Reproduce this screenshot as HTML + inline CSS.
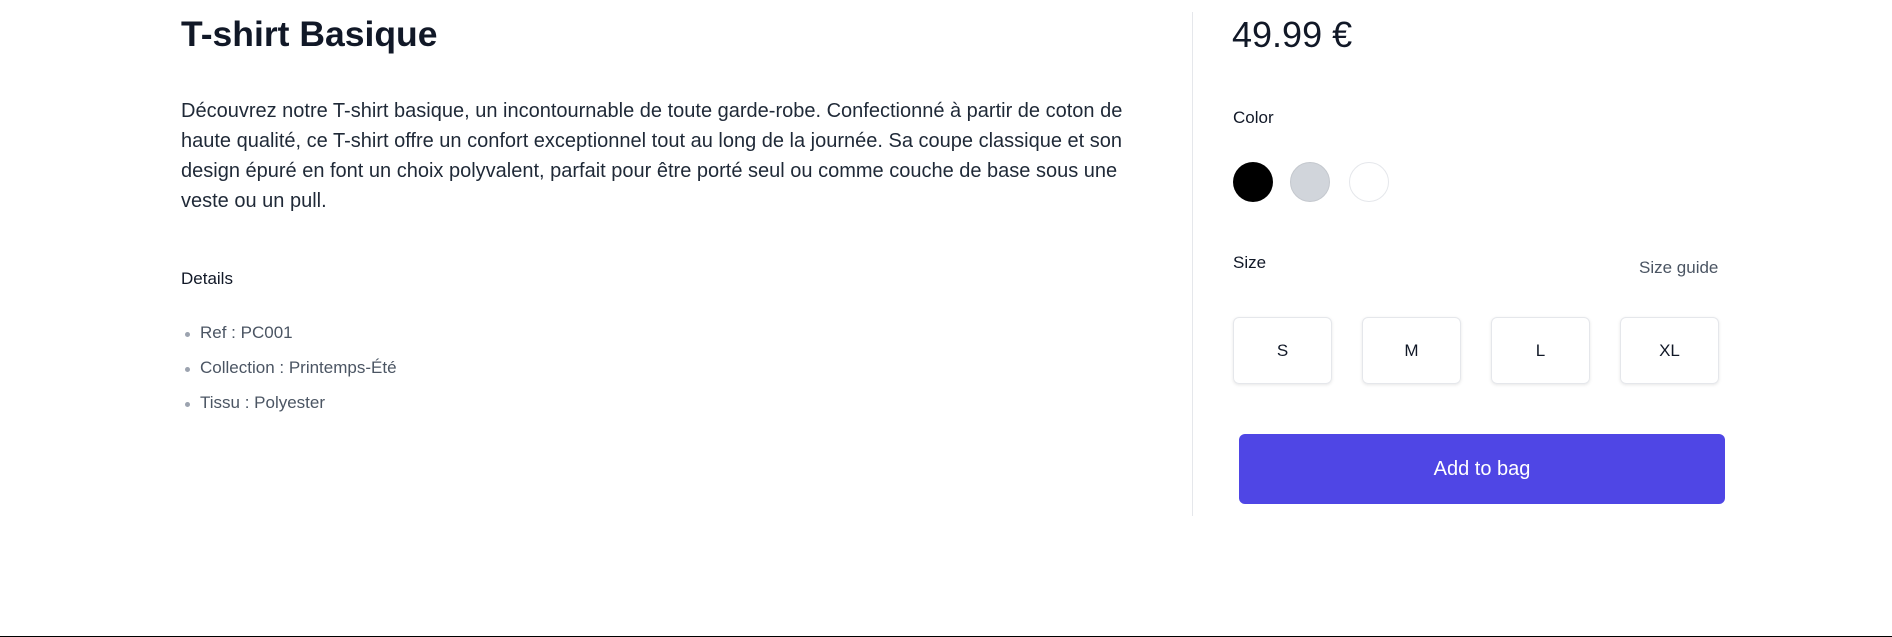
<!DOCTYPE html>
<html><head><meta charset="utf-8"><style>
*{margin:0;padding:0;box-sizing:border-box}
body{width:1892px;height:637px;background:#fff;font-family:"Liberation Sans",Arial,sans-serif;position:relative;overflow:hidden;color:#111827}
.a{position:absolute;white-space:nowrap}
h1{position:absolute;left:181px;top:12px;font-size:35.5px;font-weight:700;line-height:44px;color:#111827}
.p{position:absolute;left:181px;top:96px;width:946px;font-size:20px;line-height:30px;color:#1f2937;white-space:normal}
.li{position:absolute;left:200px;font-size:17px;color:#4b5563}
.li:before{content:"";position:absolute;left:-15px;top:9px;width:5px;height:5px;border-radius:50%;background:#9ca3af}
.div{position:absolute;left:1192px;top:12px;width:1px;height:504px;background:#e5e7eb}
.sw{position:absolute;top:162px;width:40px;height:40px;border-radius:50%}
.sz{position:absolute;top:317px;width:99px;height:67px;border:1px solid #e5e7eb;border-radius:6px;box-shadow:0 1px 3px rgba(0,0,0,.1);font-size:17px;display:flex;align-items:center;justify-content:center;color:#111827}
.btn{position:absolute;left:1239px;top:434px;width:486px;height:70px;background:#4f46e5;border-radius:6px;color:#fff;font-size:20px;display:flex;align-items:center;justify-content:center}
</style></head><body>
<h1>T-shirt Basique</h1>
<div class="p">Découvrez notre T-shirt basique, un incontournable de toute garde-robe. Confectionné à partir de coton de haute qualité, ce T-shirt offre un confort exceptionnel tout au long de la journée. Sa coupe classique et son design épuré en font un choix polyvalent, parfait pour être porté seul ou comme couche de base sous une veste ou un pull.</div>
<div class="a" style="left:181px;top:269px;font-size:17px">Details</div>
<div class="li a" style="top:323px">Ref : PC001</div>
<div class="li a" style="top:358px">Collection : Printemps-Été</div>
<div class="li a" style="top:393px">Tissu : Polyester</div>
<div class="div"></div>
<div class="a" style="left:1232px;top:13px;font-size:36px;line-height:44px">49.99 €</div>
<div class="a" style="left:1233px;top:108px;font-size:17px">Color</div>
<div class="sw" style="left:1233px;background:#000"></div>
<div class="sw" style="left:1290px;background:#d1d5db;border:1px solid #c4c8ce"></div>
<div class="sw" style="left:1349px;background:#fff;border:1px solid #e5e7eb"></div>
<div class="a" style="left:1233px;top:253px;font-size:17px">Size</div>
<div class="a" style="left:1639px;top:258px;font-size:17px;color:#4b5563">Size guide</div>
<div class="sz" style="left:1233px">S</div>
<div class="sz" style="left:1362px">M</div>
<div class="sz" style="left:1491px">L</div>
<div class="sz" style="left:1620px">XL</div>
<div class="btn">Add to bag</div>
<div style="position:absolute;left:0;top:636px;width:1892px;height:1px;background:#000"></div>
</body></html>
